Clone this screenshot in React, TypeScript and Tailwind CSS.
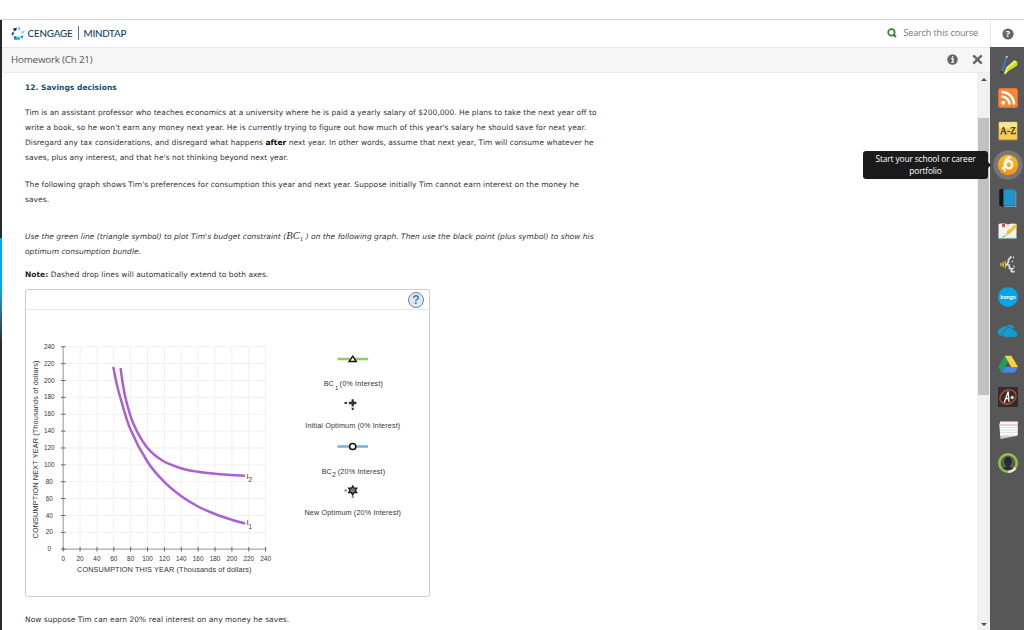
import type { ReactNode } from 'react';

type Point = [number, number];

const ticks = Array.from({ length: 13 }, (_, i) => i);
const STEP = 16.87;
const X0 = 63.2;
const Y0 = 549.2;

const curveOne: Point[] = [
  [113.3, 367], [116.5, 383], [120.6, 398.5], [130.3, 429], [147.3, 461.5], [164, 481.7],
  [181, 496], [198, 506.5], [215, 514], [231.7, 519.7], [245, 523.5],
];

const curveTwo: Point[] = [
  [120.6, 368], [122.5, 382], [126, 400], [133.3, 423.5], [146.7, 447], [162.3, 460.5],
  [181.7, 468.5], [198, 471.8], [215, 473.8], [231.7, 475], [245, 475.8],
];

function smooth(points: Point[]) {
  let d = `M${points[0][0]} ${points[0][1]}`;
  for (let i = 0; i < points.length - 1; i++) {
    const a = points[Math.max(i - 1, 0)];
    const b = points[i];
    const c = points[i + 1];
    const e = points[Math.min(i + 2, points.length - 1)];
    d += ` C${b[0] + (c[0] - a[0]) / 6} ${b[1] + (c[1] - a[1]) / 6} ${c[0] - (e[0] - b[0]) / 6} ${c[1] - (e[1] - b[1]) / 6} ${c[0]} ${c[1]}`;
  }
  return d;
}

function Logo() {
  return (
    <svg width="14" height="15" viewBox="0 0 14 15" className="shrink-0">
      <path d="M6.3 1.3 9 .5 9.7 3 7.7 4.7Z" fill="#7fd0f2" />
      <path d="M10 5.5 13.7 4.5 13 7 10.8 8.2Z" fill="#8ed6f5" />
      <path d="M9.5 9.7 12.5 9.5 11.7 12.5 9.5 12Z" fill="#19a7e0" />
      <path d="M6.5 10.3 9 11.5 8.5 14 6 13.7Z" fill="#19a7e0" />
      <path d="M2.8 10 5.5 10.5 6 13.8 3 13.5Z" fill="#0a7fc2" />
      <path d="M.3 7.5 2.5 5.3 3.3 8 1.3 9.7Z" fill="#3c6485" />
      <path d="M2 2.5 5.7 1.8 5.5 4.2 3.3 5.2Z" fill="#003865" />
    </svg>
  );
}

function RailIcon({ children }: { children: ReactNode }) {
  return (
    <div className="flex h-[33.2px] shrink-0 items-center justify-center">
      <svg width="30" height="30" viewBox="-15 -15 30 30">{children}</svg>
    </div>
  );
}

function Rail() {
  return (
    <aside className="flex w-[34px] grow flex-col bg-[#575757] pt-[1.5px] pl-[2px]">
      {/* highlighter */}
      <RailIcon>
        <path d="M-1.6-7.5-6 6.5" stroke="#3d78bd" strokeWidth="2.2" />
        <path d="M-1.1-9-1.6-7.3" stroke="#c3cbd3" strokeWidth="2" />
        <path d="M-6 6-6.9 8.7" stroke="#222" strokeWidth="1" />
        <path d="M6.5-4.8 9.6-2.8 9 .8.5 6-3.2 9.8-4 8-2 3Z" fill="#d0dd22" />
        <path d="M6.5-4.8 8.6-3.5-.5 3.8-2 2.5Z" fill="#ecf162" />
        <path d="m-2 4-1.2 5 2.7-2.5Z" fill="#f2f5a8" />
      </RailIcon>
      {/* rss */}
      <RailIcon>
        <rect x="-10" y="-10" width="20" height="20" rx="2.5" fill="#e8682c" />
        <rect x="-9.2" y="-9.2" width="18.4" height="18.4" rx="2" fill="#f58634" />
        <circle cx="-4.7" cy="4.8" r="2" fill="#fff" />
        <path d="M-6.5-1.5A8 8 0 0 1 1.5 6.6M-6.5-6A12.5 12.5 0 0 1 6 6.6" fill="none" stroke="#fff" strokeWidth="2.5" />
      </RailIcon>
      {/* glossary */}
      <RailIcon>
        <rect x="-9.5" y="-9.2" width="19" height="18.4" rx="1.2" fill="#cf9f32" />
        <rect x="-9" y="-8.8" width="18" height="17" rx="1" fill="#f1cc5d" />
        <rect x="-9" y="-8.8" width="18" height="6" rx="1" fill="#fae592" />
        <text x="0" y="3.3" textAnchor="middle" fontSize="10" fill="#3a2e14" stroke="#3a2e14" strokeWidth=".25" textLength="16" lengthAdjust="spacingAndGlyphs" fontFamily="'Liberation Serif', serif">A-Z</text>
      </RailIcon>
      {/* portfolio */}
      <RailIcon>
        <defs>
          <linearGradient id="portfolio" x1="0" y1="0" x2="0" y2="1">
            <stop offset="0" stopColor="#fdbb1e" />
            <stop offset="1" stopColor="#f98d1d" />
          </linearGradient>
        </defs>
        <circle r="14.7" fill="#777" />
        <circle r="10.2" fill="url(#portfolio)" />
        <path d="M1.5-7.5C-2.5-6-3.5-1.5-3.6 2.5" fill="none" stroke="#fff" strokeWidth="2.6" strokeLinecap="round" />
        <ellipse cx=".8" cy="-.3" rx="3.4" ry="3.7" fill="none" stroke="#fff" strokeWidth="2.4" />
        <path d="M-6.3 3.2C-3.5 2.5-4 5.5-2.5 6.3" fill="none" stroke="#fff" strokeWidth="1.8" />
      </RailIcon>
      {/* book */}
      <RailIcon>
        <path d="M-8.7-8.5-4.5-9.2V9.3L-8.7 7.5Z" fill="#11161a" />
        <path d="M-4.7-8.7H7.5V8.2H-4.7Z" fill="#176f9b" />
        <path d="M-4-8.5H6.8V7H-4Z" fill="#2194ca" />
        <path d="M-4 8.4H7.8V-7" fill="none" stroke="#a9bdc7" strokeWidth=".7" />
      </RailIcon>
      {/* notes */}
      <RailIcon>
        <path d="M-9.5-7Q-4.5-8.5 0-6.5 4-8 8.5-7V7.3H-9.5Z" fill="#f0f3f2" />
        <path d="M-9.5 7.5H8.7" stroke="#73aeb5" strokeWidth="1.2" />
        <path d="M0-6V6.5" stroke="#d1d6d5" strokeWidth=".7" />
        <path d="M-6-7.5h3v4.2l-1.5-1.2L-6-3.3Z" fill="#e04a35" />
        <path d="M7-6.8 9.3-4.6 2 2.6-2.5 4.5-1 .5Z" fill="#ecc625" />
        <path d="M-2.5 4.5-5.5 6" stroke="#8c7528" strokeWidth=".8" />
      </RailIcon>
      {/* read aloud */}
      <RailIcon>
        <path d="M3.5-7.5Q-.3-4.5.4-2L-1.5 1H1.3L1.5 4.5H4.5Q2.5 6 3.5 7.7H6.8" fill="none" stroke="#dcdcdc" strokeWidth="1.7" />
        <path d="M5.5-7.5V-5.8M5-3.2 3.8-2M5.5 1.5 6.5 2.8" fill="none" stroke="#dcdcdc" strokeWidth="1.2" />
        <path d="M-3-3Q-1.8.5-3 4M-5.2-2Q-4.2.5-5.2 3M-7.3-1Q-6.6.5-7.3 2" fill="none" stroke="#dcbb35" strokeWidth="1.4" />
      </RailIcon>
      {/* bongo */}
      <RailIcon>
        <circle r="10" fill="#08a4e4" />
        <text y="1.8" textAnchor="middle" fontSize="6.2" fontWeight="bold" fill="#fff" textLength="15.5" lengthAdjust="spacingAndGlyphs" fontFamily="Lato, sans-serif">bongo</text>
      </RailIcon>
      {/* onedrive */}
      <RailIcon>
        <path d="M-5.5 4.5H-7.5A3.6 3.6 0 0 1-7-2.6 4.2 4.2 0 0 1-2-4.4 5.2 5.2 0 0 1 6.7-3.3L3-2-1-2.5-4 .5Z" fill="#139bd4" />
        <path d="M-3.2 6.3A3.5 3.5 0 0 1-3.3-.5 4.7 4.7 0 0 1 4.8-1.8 3.8 3.8 0 0 1 7.5.2 3.2 3.2 0 0 1 7.5 6.3Z" fill="#139bd4" stroke="#575757" strokeWidth=".7" />
      </RailIcon>
      {/* drive */}
      <RailIcon>
        <path d="M-3.2-8.3-9.8 3.2-6.5 8.5.2-3Z" fill="#19a15e" />
        <path d="M-3.2-8.3H3.4L10 3H3.2Z" fill="#fdd045" />
        <path d="M-3.2 3H10L6.7 8.5H-6.5Z" fill="#4387f5" />
      </RailIcon>
      {/* grades */}
      <RailIcon>
        <rect x="-10" y="-10" width="20" height="20" fill="#302e2d" />
        <ellipse rx="8.4" ry="6.8" transform="rotate(-30)" fill="none" stroke="#c84627" strokeWidth="1.3" />
        <path d="M-8 3Q-5 7 3 6.5" fill="none" stroke="#c84627" strokeWidth=".8" />
        <path d="M-3.7 5.5 .2-5.5 1 5M-2.5 1.5H1.3M2.5.5H6M4.2-1.3V2.3" fill="none" stroke="#f2f2f2" strokeWidth="1.3" />
      </RailIcon>
      {/* flashcards */}
      <RailIcon>
        <path d="M-9-6.5 8.5-7V6L-7.5 9Z" fill="#ccc" />
        <path d="M-8-8.5H9.8V5.5H-8Z" fill="#f7f8f8" />
        <path d="M-8-5H9.8" stroke="#e38d8b" strokeWidth=".8" />
        <path d="M-8-2.5H9.8M-8 0H9.8M-8 2.5H9.8" stroke="#c7dce5" strokeWidth=".7" />
      </RailIcon>
      {/* profile ring */}
      <RailIcon>
        <circle r="8.7" fill="#5c5c5c" stroke="#8cc43d" strokeWidth="2.6" />
        <path d="M.3 8.7A8.7 8.7 0 0 0 7.3 4.7" fill="none" stroke="#e5e9df" strokeWidth="2.6" />
        <ellipse cy="-1.4" rx="3.8" ry="4.8" fill="#282828" />
        <path d="M-5.5 5.5Q-2 4-1.5 2H1.5Q2 4 5.5 5.5 0 9-5.5 5.5Z" fill="#303030" />
      </RailIcon>
    </aside>
  );
}

function Chart() {
  return (
    <svg
      width="403"
      height="286"
      viewBox="26 310 403 286"
      className="block"
      fontFamily="'Liberation Sans', Arial, sans-serif"
      fill="#333"
    >
      {ticks.map(i => (
        <path
          key={i}
          d={`M${X0 + i * STEP} ${Y0 - 12 * STEP}V${Y0}M${X0} ${Y0 - i * STEP}H${X0 + 12 * STEP}`}
          stroke="#f1f1f1"
          strokeWidth="1"
        />
      ))}
      <path d={`M${X0} 346V${Y0}H266`} stroke="#aaa" strokeWidth="1.2" fill="none" />
      {ticks.map(i => (
        <g key={i} fontSize="6.4">
          <path d={`M${X0 + i * STEP} 547V551.5M61 ${Y0 - i * STEP}H65.5`} stroke="#666" strokeWidth="1" />
          <text x={X0 + i * STEP} y="561" textAnchor="middle">{i * 20}</text>
          <text x="49.3" y={Y0 - i * STEP + 2.1} textAnchor="middle">{i * 20}</text>
        </g>
      ))}
      <path d={smooth(curveOne)} fill="none" stroke="#ab5fd5" strokeWidth="2.5" />
      <path d={smooth(curveTwo)} fill="none" stroke="#ab5fd5" strokeWidth="2.5" />
      <text x="246.5" y="478.5" fontSize="7.5">I</text>
      <text x="248.6" y="481.8" fontSize="6.3">2</text>
      <text x="246.5" y="525.3" fontSize="7.5">I</text>
      <text x="248.6" y="528.6" fontSize="6.3">1</text>
      <text x="77" y="572" fontSize="7.3" textLength="174.5">CONSUMPTION THIS YEAR (Thousands of dollars)</text>
      <text transform="translate(37.8 538.5) rotate(-90)" fontSize="7.3" textLength="178">CONSUMPTION NEXT YEAR (Thousands of dollars)</text>

      {/* legend */}
      <path d="M337.5 359H368" stroke="#82d85b" strokeWidth="2.6" />
      <path d="M352.7 356.2 356.3 361.5H349.1Z" fill="#fff" stroke="#111" strokeWidth="1.4" />
      <text x="323.8" y="386" fontSize="7.2" textLength="10">BC</text>
      <text x="334.9" y="389.5" fontSize="5.8">1</text>
      <text x="339.6" y="386" fontSize="7.2" textLength="43.4">(0% Interest)</text>
      <path d="M348.8 403H356.4M352.7 399.2V406.6" stroke="#333" strokeWidth="2.3" />
      <path d="M344.5 403.1H347M352.7 407.8V410" stroke="#333" strokeWidth="2" />
      <text x="305.3" y="428" fontSize="7.2" textLength="94.9">Initial Optimum (0% Interest)</text>
      <path d="M337.5 446.5H368" stroke="#7fafda" strokeWidth="2.6" />
      <circle cx="352.7" cy="446.5" r="3.1" fill="#fff" stroke="#111" strokeWidth="1.5" />
      <text x="321.7" y="473.5" fontSize="7.2" textLength="10">BC</text>
      <text x="332.3" y="477" fontSize="6.5">2</text>
      <text x="337.8" y="473.5" fontSize="7.2" textLength="47.4">(20% Interest)</text>
      <path d="M344.5 490.4H347M352.7 495.5V498" stroke="#888" strokeWidth="2" />
      <path d="M352.7 485.9 354 488.2H356.8L355.4 490.4 356.8 492.6H354L352.7 494.9 351.4 492.6H348.6L350 490.4 348.6 488.2H351.4Z" fill="#777" stroke="#151515" strokeWidth="1.2" />
      <text x="304.5" y="515" fontSize="7.2" textLength="96.5">New Optimum (20% Interest)</text>
    </svg>
  );
}

function Problem() {
  return (
    <main className="min-w-0 grow overflow-hidden pt-[7.5px] pl-[22px] font-['DejaVu_Sans',Verdana,sans-serif] text-[7.5px] leading-[14.9px] tracking-[0.033px] whitespace-nowrap text-[#333]">
      <h1 className="font-bold text-[#154a70]">12. Savings decisions</h1>
      <p className="mt-[11px]">
        Tim is an assistant professor who teaches economics at a university where he is paid a yearly salary of $200,000. He plans to take the next year off to<br />
        write a book, so he won't earn any money next year. He is currently trying to figure out how much of this year's salary he should save for next year.<br />
        Disregard any tax considerations, and disregard what happens <b className="text-black">after</b> next year. In other words, assume that next year, Tim will consume whatever he<br />
        saves, plus any interest, and that he's not thinking beyond next year.
      </p>
      <p className="mt-[12px]">
        The following graph shows Tim's preferences for consumption this year and next year. Suppose initially Tim cannot earn interest on the money he<br />
        saves.
      </p>
      <p className="mt-[22.5px] italic">
        Use the green line (triangle symbol) to plot Tim's budget constraint (<span className="font-['Liberation_Serif',serif] text-[10.5px] leading-none">BC</span><span className="relative top-[1.5px] font-['Liberation_Serif',serif] text-[7px] leading-none not-italic">1</span> ) on the following graph. Then use the black point (plus symbol) to show his<br />
        optimum consumption bundle.
      </p>
      <p className="mt-[7.5px]">
        <b className="text-[#222]">Note:</b> Dashed drop lines will automatically extend to both axes.
      </p>
      <section className="mt-[6.5px] h-[308px] w-[405px] rounded-[3px] border border-[#ccc]">
        <div className="flex h-[20px] items-center justify-end border-b border-[#e8e8e8] pr-[5px]">
          <span className="flex size-[16px] items-center justify-center rounded-full border border-[#5b88b3] bg-[#dfe9f2] font-['Liberation_Sans',sans-serif] text-[12px] leading-none font-bold text-[#4f7ca8]">?</span>
        </div>
        <Chart />
      </section>
      <p className="mt-[15.5px]">Now suppose Tim can earn 20% real interest on any money he saves.</p>
    </main>
  );
}

export default function App() {
  return (
    <div className="flex h-[630px] w-[1024px] flex-col overflow-hidden bg-white pt-[19px] font-['Open_Sans','Noto_Sans',sans-serif]">
      <div className="flex min-h-0 grow border-t border-[#d2d2d2]">
        <div className="flex w-[2px] shrink-0 flex-col bg-[#25292e]">
          <div className="mt-[218px] h-[50px] bg-[#00a9e8]" />
          <div className="h-[56px] bg-linear-to-b from-[#00a9e8] to-[#25292e]" />
        </div>

        <div className="flex min-w-0 grow flex-col">
          <header className="flex h-[28px] shrink-0 items-center border-b border-[#e8e8e8] pr-[12px] pl-[9px] pb-px text-[#0d3f68]">
            <Logo />
            <span className="ml-[2.5px] font-['Lato'] text-[9.8px] font-medium tracking-[-0.15px]">CENGAGE</span>
            <span className="mx-[5px] h-[14px] w-px bg-[#537895]" />
            <span className="font-['Lato'] text-[9.8px] font-medium tracking-[-0.25px]">MINDTAP</span>
            <svg width="10" height="10" viewBox="0 0 10 10" className="ml-auto">
              <circle cx="4.4" cy="4.4" r="3.2" fill="none" stroke="#35832a" strokeWidth="1.7" />
              <path d="M6.7 6.7 9 9" stroke="#35832a" strokeWidth="2" />
            </svg>
            <span className="ml-[6px] text-[9px] tracking-[-0.12px] text-[#777]">Search this course</span>
          </header>

          <div className="flex h-[25px] shrink-0 items-center border-b border-[#ececec] bg-[#f6f6f6] pr-[7px] pl-[9px]">
            <span className="relative top-[0.5px] text-[9.8px] tracking-[-0.2px] text-[#555]">Homework (Ch 21)</span>
            <svg width="11" height="11" viewBox="0 0 11 11" className="relative -top-px ml-auto">
              <circle cx="5.5" cy="5.5" r="5.2" fill="#666" />
              <path d="M5.6 2V3.5M4.2 4.8H5.9V8M4.2 8.1H7" stroke="#f6f6f6" strokeWidth="1.4" fill="none" />
            </svg>
            <svg width="11" height="11" viewBox="0 0 11 11" className="relative -top-px ml-[14px]">
              <path d="M1.3 1.3 9.7 9.7M9.7 1.3 1.3 9.7" stroke="#666" strokeWidth="2.4" />
            </svg>
          </div>

          <div className="flex min-h-0 grow pl-px">
            <Problem />
            <div className="flex w-[13px] shrink-0 flex-col items-center bg-[#f1f1f1]">
              <svg width="6" height="3" viewBox="0 0 6 3" className="mt-[5px]"><path d="M3 0 6 3H0Z" fill="#505050" /></svg>
              <div className="mt-[37px] h-[277px] w-[11px] bg-[#c1c1c1]" />
              <svg width="6" height="3" viewBox="0 0 6 3" className="mt-auto mb-[4px]"><path d="M0 0H6L3 3Z" fill="#505050" /></svg>
            </div>
          </div>
        </div>

        <div className="relative flex w-[34px] shrink-0 flex-col">
          <div className="flex h-[27px] shrink-0 items-center justify-center border-l border-[#e8e8e8]">
            <svg width="12" height="12" viewBox="0 0 12 12">
              <circle cx="6" cy="6" r="5.6" fill="#666" />
              <text x="6" y="9.2" textAnchor="middle" fontSize="9" fontWeight="bold" fill="#fff" fontFamily="'Open Sans', sans-serif">?</text>
            </svg>
          </div>
          <Rail />
          <div className="absolute top-[131px] right-[36px] flex h-[28px] w-[125px] items-center justify-center rounded-[3px] bg-[#1b1b1b] pb-px text-center text-[8.4px] leading-[11.5px] tracking-[-0.14px] text-white">
            <span>Start your school or career<br />portfolio</span>
            <svg width="3" height="6" viewBox="0 0 3 6" className="absolute top-[11px] left-full"><path d="M0 0 3 3 0 6Z" fill="#1b1b1b" /></svg>
          </div>
        </div>
      </div>
    </div>
  );
}
